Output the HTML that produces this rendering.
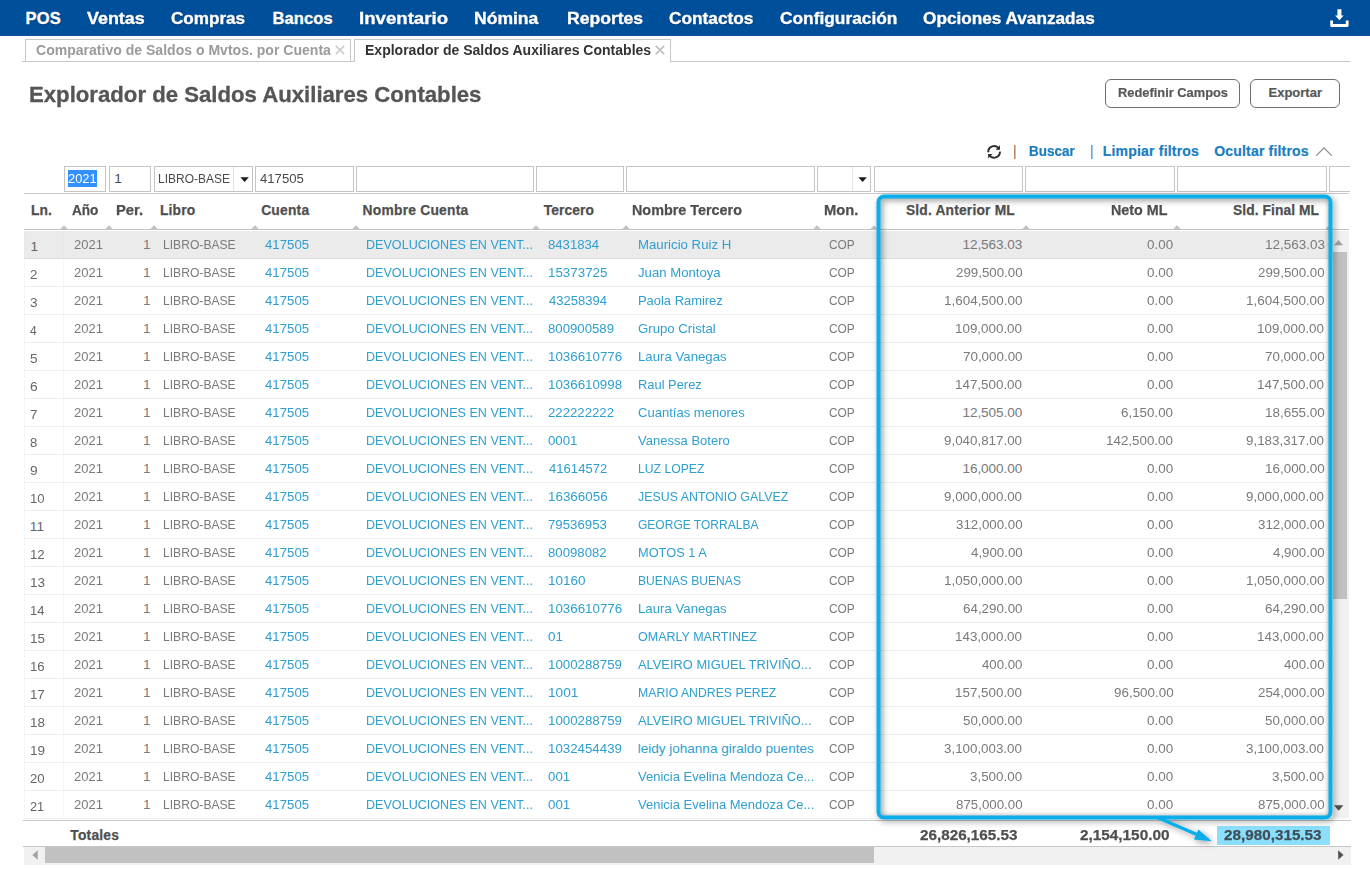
<!DOCTYPE html>
<html><head><meta charset="utf-8"><title>Explorador de Saldos Auxiliares Contables</title>
<style>
html,body{margin:0;padding:0;background:#fff;}
body{width:1370px;height:870px;position:relative;overflow:hidden;font-family:"Liberation Sans",sans-serif;}
.t{position:absolute;white-space:nowrap;line-height:20px;transform-origin:0 0;}
.b{position:absolute;}
</style></head><body>
<div class="b" style="left:0px;top:0px;width:1370px;height:35px;background:#004f9a;"></div>
<div class="b" style="left:0px;top:35px;width:1370px;height:1px;background:#1a4a9c;"></div>
<span class="t" id="t1" style="top:8.25px;font-size:16.5px;color:#ffffff;font-weight:bold;letter-spacing:0.187px;left:25.56px;-webkit-text-stroke:0.35px #ffffff;text-shadow:0 1px 1px rgba(0,30,80,0.6);">POS</span>
<span class="t" id="t2" style="top:8.25px;font-size:16.5px;color:#ffffff;font-weight:bold;left:87px;transform:scaleX(1.0854);-webkit-text-stroke:0.35px #ffffff;text-shadow:0 1px 1px rgba(0,30,80,0.6);">Ventas</span>
<span class="t" id="t3" style="top:8.25px;font-size:16.5px;color:#ffffff;font-weight:bold;left:171px;transform:scaleX(1.0364);-webkit-text-stroke:0.35px #ffffff;text-shadow:0 1px 1px rgba(0,30,80,0.6);">Compras</span>
<span class="t" id="t4" style="top:8.25px;font-size:16.5px;color:#ffffff;font-weight:bold;letter-spacing:0.093px;left:272.52px;-webkit-text-stroke:0.35px #ffffff;text-shadow:0 1px 1px rgba(0,30,80,0.6);">Bancos</span>
<span class="t" id="t5" style="top:8.25px;font-size:16.5px;color:#ffffff;font-weight:bold;left:359px;transform:scaleX(1.1292);-webkit-text-stroke:0.35px #ffffff;text-shadow:0 1px 1px rgba(0,30,80,0.6);">Inventario</span>
<span class="t" id="t6" style="top:8.25px;font-size:16.5px;color:#ffffff;font-weight:bold;left:474px;transform:scaleX(1.0635);-webkit-text-stroke:0.35px #ffffff;text-shadow:0 1px 1px rgba(0,30,80,0.6);">Nómina</span>
<span class="t" id="t7" style="top:8.25px;font-size:16.5px;color:#ffffff;font-weight:bold;left:567px;transform:scaleX(1.0644);-webkit-text-stroke:0.35px #ffffff;text-shadow:0 1px 1px rgba(0,30,80,0.6);">Reportes</span>
<span class="t" id="t8" style="top:8.25px;font-size:16.5px;color:#ffffff;font-weight:bold;left:669px;transform:scaleX(1.0459);-webkit-text-stroke:0.35px #ffffff;text-shadow:0 1px 1px rgba(0,30,80,0.6);">Contactos</span>
<span class="t" id="t9" style="top:8.25px;font-size:16.5px;color:#ffffff;font-weight:bold;left:780px;transform:scaleX(1.0498);-webkit-text-stroke:0.35px #ffffff;text-shadow:0 1px 1px rgba(0,30,80,0.6);">Configuración</span>
<span class="t" id="t10" style="top:8.25px;font-size:16.5px;color:#ffffff;font-weight:bold;left:923px;transform:scaleX(1.0425);-webkit-text-stroke:0.35px #ffffff;text-shadow:0 1px 1px rgba(0,30,80,0.6);">Opciones Avanzadas</span>
<svg class="b" style="left:1328px;top:7px;" width="24" height="22" viewBox="0 0 24 22"><path d="M9.4 2.2h4v6.2h2.2L11.4 13.2L7.1 8.4h2.3z" fill="#fff"/><path d="M3.6 13.4v5.1h15.6v-5.1" stroke="#fff" stroke-width="2.8" fill="none" stroke-linejoin="round"/></svg>
<div class="b" style="left:22px;top:61px;width:333px;height:1px;background:#c6c6c6;"></div>
<div class="b" style="left:671px;top:61px;width:679px;height:1px;background:#c6c6c6;"></div>
<div class="b" style="left:25px;top:39px;width:326px;height:23px;border:1px solid #c6c6c6;border-bottom:none;box-sizing:border-box;"></div>
<div class="b" style="left:354px;top:39px;width:317px;height:23px;border:1px solid #c6c6c6;border-bottom:none;box-sizing:border-box;"></div>
<span class="t" id="t11" style="top:40.25px;font-size:14.5px;color:#9b9b9b;font-weight:bold;left:36px;transform:scaleX(0.9683);">Comparativo de Saldos o Mvtos. por Cuenta</span>
<span class="t" id="t12" style="top:40.25px;font-size:14.5px;color:#333333;font-weight:bold;left:365px;transform:scaleX(0.9667);">Explorador de Saldos Auxiliares Contables</span>
<svg class="b" style="left:335.3px;top:44.6px;" width="10" height="10" viewBox="0 0 10 10"><path d="M0.8 0.8L9.2 9.2M9.2 0.8L0.8 9.2" stroke="#cdcdcd" stroke-width="1.7" fill="none"/></svg>
<svg class="b" style="left:654.6px;top:44.6px;" width="10" height="10" viewBox="0 0 10 10"><path d="M0.8 0.8L9.2 9.2M9.2 0.8L0.8 9.2" stroke="#c0c0c0" stroke-width="1.7" fill="none"/></svg>
<span class="t" id="t13" style="top:84.75px;font-size:21.5px;color:#555555;font-weight:bold;left:29px;transform:scaleX(1.0309);-webkit-text-stroke:0.3px #555555;">Explorador de Saldos Auxiliares Contables</span>
<div class="b" style="left:1105px;top:79px;width:135px;height:29px;border:1px solid #6f6f6f;border-radius:6px;box-sizing:border-box;"></div>
<div class="b" style="left:1250px;top:79px;width:90px;height:29px;border:1px solid #6f6f6f;border-radius:6px;box-sizing:border-box;"></div>
<span class="t" id="t14" style="top:82.5px;font-size:13px;color:#575757;font-weight:bold;left:1118px;transform:scaleX(0.9888);-webkit-text-stroke:0.2px #575757;">Redefinir Campos</span>
<span class="t" id="t15" style="top:82.5px;font-size:13px;color:#575757;font-weight:bold;letter-spacing:0.012px;left:1268.48px;-webkit-text-stroke:0.2px #575757;">Exportar</span>
<svg class="b" style="left:986px;top:144px;" width="16" height="16" viewBox="0 0 16 16"><path d="M2.3 8.2A5.8 5.8 0 0 1 12.85 4.57" stroke="#2e2e2e" stroke-width="2" fill="none"/><path d="M13.9 7.6A5.8 5.8 0 0 1 3.35 11.23" stroke="#2e2e2e" stroke-width="2" fill="none"/><path d="M14 1.2V5.8H9.6z" fill="#2e2e2e"/><path d="M2.1 14.5V10H6.5z" fill="#2e2e2e"/></svg>
<div class="b" style="left:1014px;top:145px;width:1px;height:14px;background:#b98a6a;"></div>
<div class="b" style="left:1015px;top:145px;width:1px;height:14px;background:#9accf7;"></div>
<span class="t" id="t16" style="top:141px;font-size:14px;color:#1a7dbf;font-weight:bold;left:1029px;transform:scaleX(0.963);-webkit-text-stroke:0.2px #1a7dbf;">Buscar</span>
<div class="b" style="left:1091px;top:145px;width:1px;height:14px;background:#b98a6a;"></div>
<div class="b" style="left:1092px;top:145px;width:1px;height:14px;background:#9accf7;"></div>
<span class="t" id="t17" style="top:141px;font-size:14px;color:#1a7dbf;font-weight:bold;letter-spacing:0.2px;left:1102.78px;-webkit-text-stroke:0.2px #1a7dbf;">Limpiar filtros</span>
<span class="t" id="t18" style="top:141px;font-size:14px;color:#1a7dbf;font-weight:bold;letter-spacing:0.189px;left:1214.19px;-webkit-text-stroke:0.2px #1a7dbf;">Ocultar filtros</span>
<svg class="b" style="left:1315px;top:145px;" width="18" height="12" viewBox="0 0 18 12"><path d="M1.3 10.6 L9 2.9 L16.7 10.6" stroke="#8a8a8a" stroke-width="1.3" fill="none"/></svg>
<div class="b" style="left:64px;top:166px;width:42px;height:26px;border:1px solid #c4c4c4;box-sizing:border-box;background:#fff;"></div>
<div class="b" style="left:109px;top:166px;width:42px;height:26px;border:1px solid #c4c4c4;box-sizing:border-box;background:#fff;"></div>
<div class="b" style="left:154px;top:166px;width:99px;height:26px;border:1px solid #c4c4c4;box-sizing:border-box;background:#fff;"></div>
<div class="b" style="left:255px;top:166px;width:99px;height:26px;border:1px solid #c4c4c4;box-sizing:border-box;background:#fff;"></div>
<div class="b" style="left:356px;top:166px;width:178px;height:26px;border:1px solid #c4c4c4;box-sizing:border-box;background:#fff;"></div>
<div class="b" style="left:536px;top:166px;width:88px;height:26px;border:1px solid #c4c4c4;box-sizing:border-box;background:#fff;"></div>
<div class="b" style="left:626px;top:166px;width:189px;height:26px;border:1px solid #c4c4c4;box-sizing:border-box;background:#fff;"></div>
<div class="b" style="left:817px;top:166px;width:54px;height:26px;border:1px solid #c4c4c4;box-sizing:border-box;background:#fff;"></div>
<div class="b" style="left:874px;top:166px;width:149px;height:26px;border:1px solid #c4c4c4;box-sizing:border-box;background:#fff;"></div>
<div class="b" style="left:1025px;top:166px;width:150px;height:26px;border:1px solid #c4c4c4;box-sizing:border-box;background:#fff;"></div>
<div class="b" style="left:1177px;top:166px;width:150px;height:26px;border:1px solid #c4c4c4;box-sizing:border-box;background:#fff;"></div>
<div class="b" style="left:1329px;top:166px;width:20.5px;height:26px;border:1px solid #c4c4c4;box-sizing:border-box;background:#fff;border-right:none;"></div>
<div class="b" style="left:68px;top:170px;width:29px;height:17px;background:#3390ff;"></div>
<span class="t" id="t19" style="top:169px;font-size:13.6px;color:#ffffff;left:68px;transform:scaleX(0.9446);">2021</span>
<span class="t" id="t20" style="top:169px;font-size:13.6px;color:#4a4a4a;left:114.29px;">1</span>
<span class="t" id="t21" style="top:169px;font-size:13.6px;color:#4a4a4a;left:158px;transform:scaleX(0.8812);">LIBRO-BASE</span>
<div class="b" style="left:233px;top:167px;width:1px;height:24px;background:#e4e4e4;"></div>
<svg class="b" style="left:240px;top:177px;" width="10" height="6" viewBox="0 0 10 6"><path d="M0.4 0.3h8.4L4.6 5z" fill="#1a1a1a"/></svg>
<span class="t" id="t22" style="top:169px;font-size:13.6px;color:#4a4a4a;left:260px;transform:scaleX(0.967);">417505</span>
<div class="b" style="left:852px;top:167px;width:1px;height:24px;background:#e4e4e4;"></div>
<svg class="b" style="left:858px;top:177px;" width="10" height="6" viewBox="0 0 10 6"><path d="M0.4 0.3h8.4L4.6 5z" fill="#1a1a1a"/></svg>
<div class="b" style="left:24px;top:193px;width:1325px;height:1px;background:#c9c9c9;"></div>
<div class="b" style="left:24px;top:229px;width:1325px;height:1px;background:#c2c2c2;"></div>
<span class="t" id="t23" style="top:201.25px;font-size:13.8px;color:#4f4f4f;font-weight:bold;letter-spacing:0.148px;left:30.92px;-webkit-text-stroke:0.25px #4f4f4f;">Ln.</span>
<span class="t" id="t24" style="top:201.25px;font-size:13.8px;color:#4f4f4f;font-weight:bold;left:72px;transform:scaleX(0.9847);-webkit-text-stroke:0.25px #4f4f4f;">Año</span>
<span class="t" id="t25" style="top:201.25px;font-size:13.8px;color:#4f4f4f;font-weight:bold;left:116px;transform:scaleX(1.0725);-webkit-text-stroke:0.25px #4f4f4f;">Per.</span>
<span class="t" id="t26" style="top:201.25px;font-size:13.8px;color:#4f4f4f;font-weight:bold;letter-spacing:0.155px;left:160px;-webkit-text-stroke:0.25px #4f4f4f;">Libro</span>
<span class="t" id="t27" style="top:201.25px;font-size:13.8px;color:#4f4f4f;font-weight:bold;letter-spacing:0.226px;left:261.18px;-webkit-text-stroke:0.25px #4f4f4f;">Cuenta</span>
<span class="t" id="t28" style="top:201.25px;font-size:13.8px;color:#4f4f4f;font-weight:bold;letter-spacing:0.235px;left:362.62px;-webkit-text-stroke:0.25px #4f4f4f;">Nombre Cuenta</span>
<span class="t" id="t29" style="top:201.25px;font-size:13.8px;color:#4f4f4f;font-weight:bold;letter-spacing:0.118px;left:543.67px;-webkit-text-stroke:0.25px #4f4f4f;">Tercero</span>
<span class="t" id="t30" style="top:201.25px;font-size:13.8px;color:#4f4f4f;font-weight:bold;left:632px;transform:scaleX(1.0412);-webkit-text-stroke:0.25px #4f4f4f;">Nombre Tercero</span>
<span class="t" id="t31" style="top:201.25px;font-size:13.8px;color:#4f4f4f;font-weight:bold;left:824px;transform:scaleX(1.0667);-webkit-text-stroke:0.25px #4f4f4f;">Mon.</span>
<span class="t" id="t32" style="top:201.25px;font-size:13.8px;color:#4f4f4f;font-weight:bold;letter-spacing:0.19px;left:905.89px;-webkit-text-stroke:0.25px #4f4f4f;">Sld. Anterior ML</span>
<span class="t" id="t33" style="top:201.25px;font-size:13.8px;color:#4f4f4f;font-weight:bold;left:1111px;transform:scaleX(1.0373);-webkit-text-stroke:0.25px #4f4f4f;">Neto ML</span>
<span class="t" id="t34" style="top:201.25px;font-size:13.8px;color:#4f4f4f;font-weight:bold;letter-spacing:0.08px;left:1232.95px;-webkit-text-stroke:0.25px #4f4f4f;">Sld. Final ML</span>
<svg class="b" style="left:59.5px;top:225px;" width="8" height="4" viewBox="0 0 8 4"><path d="M0.3 4L4 0.2L7.7 4z" fill="#c2c2c2"/></svg>
<svg class="b" style="left:104.5px;top:225px;" width="8" height="4" viewBox="0 0 8 4"><path d="M0.3 4L4 0.2L7.7 4z" fill="#c2c2c2"/></svg>
<svg class="b" style="left:149.5px;top:225px;" width="8" height="4" viewBox="0 0 8 4"><path d="M0.3 4L4 0.2L7.7 4z" fill="#c2c2c2"/></svg>
<svg class="b" style="left:250.5px;top:225px;" width="8" height="4" viewBox="0 0 8 4"><path d="M0.3 4L4 0.2L7.7 4z" fill="#c2c2c2"/></svg>
<svg class="b" style="left:352px;top:225px;" width="8" height="4" viewBox="0 0 8 4"><path d="M0.3 4L4 0.2L7.7 4z" fill="#c2c2c2"/></svg>
<svg class="b" style="left:532px;top:225px;" width="8" height="4" viewBox="0 0 8 4"><path d="M0.3 4L4 0.2L7.7 4z" fill="#c2c2c2"/></svg>
<svg class="b" style="left:622px;top:225px;" width="8" height="4" viewBox="0 0 8 4"><path d="M0.3 4L4 0.2L7.7 4z" fill="#c2c2c2"/></svg>
<svg class="b" style="left:813px;top:225px;" width="8" height="4" viewBox="0 0 8 4"><path d="M0.3 4L4 0.2L7.7 4z" fill="#c2c2c2"/></svg>
<svg class="b" style="left:869.5px;top:225px;" width="8" height="4" viewBox="0 0 8 4"><path d="M0.3 4L4 0.2L7.7 4z" fill="#c2c2c2"/></svg>
<svg class="b" style="left:1021.5px;top:225px;" width="8" height="4" viewBox="0 0 8 4"><path d="M0.3 4L4 0.2L7.7 4z" fill="#c2c2c2"/></svg>
<svg class="b" style="left:1173px;top:225px;" width="8" height="4" viewBox="0 0 8 4"><path d="M0.3 4L4 0.2L7.7 4z" fill="#c2c2c2"/></svg>
<svg class="b" style="left:1324.5px;top:225px;" width="8" height="4" viewBox="0 0 8 4"><path d="M0.3 4L4 0.2L7.7 4z" fill="#c2c2c2"/></svg>
<div class="b" style="left:24px;top:231px;width:1309px;height:28px;background:#ebebeb;border-bottom:1px solid #dddddd;box-sizing:border-box;"></div>
<div class="b" style="left:24px;top:231px;width:1px;height:27px;background:#e3eaed;"></div>
<div class="b" style="left:63px;top:231px;width:1px;height:27px;background:#e3eaed;"></div>
<span class="t" id="t35" style="top:237.25px;font-size:13.61px;color:#666666;left:30.53px;">1</span>
<span class="t" id="t36" style="top:234.5px;font-size:13.6px;color:#7a7a7a;left:74px;transform:scaleX(0.9557);">2021</span>
<span class="t" id="t37" style="top:234.5px;font-size:13.6px;color:#7a7a7a;left:143px;">1</span>
<span class="t" id="t38" style="top:234.5px;font-size:13.6px;color:#7a7a7a;left:163px;transform:scaleX(0.8909);">LIBRO-BASE</span>
<span class="t" id="t39" style="top:234.5px;font-size:13.6px;color:#2f9fd0;left:265px;transform:scaleX(0.9718);">417505</span>
<span class="t" id="t40" style="top:234.5px;font-size:13.6px;color:#2f9fd0;left:366px;transform:scaleX(0.9254);">DEVOLUCIONES EN VENT...</span>
<span class="t" id="t41" style="top:234.5px;font-size:13.6px;color:#2f9fd0;left:548px;transform:scaleX(0.9665);">8431834</span>
<span class="t" id="t42" style="top:234.5px;font-size:13.6px;color:#2f9fd0;left:638px;transform:scaleX(0.9721);">Mauricio Ruiz H</span>
<span class="t" id="t43" style="top:234.5px;font-size:13.6px;color:#7a7a7a;left:829px;transform:scaleX(0.8737);">COP</span>
<span class="t" id="t44" style="top:234.5px;font-size:13.6px;color:#7a7a7a;letter-spacing:-0.076px;left:962.46px;">12,563.03</span>
<span class="t" id="t45" style="top:234.5px;font-size:13.6px;color:#7a7a7a;left:1147px;transform:scaleX(0.9867);">0.00</span>
<span class="t" id="t46" style="top:234.5px;font-size:13.6px;color:#7a7a7a;left:1265px;transform:scaleX(0.9922);">12,563.03</span>
<div class="b" style="left:24px;top:259px;width:1309px;height:28px;background:#ffffff;border-bottom:1px solid #eeeeee;box-sizing:border-box;"></div>
<div class="b" style="left:24px;top:259px;width:1px;height:27px;background:#f1f8fb;"></div>
<div class="b" style="left:63px;top:259px;width:1px;height:27px;background:#f1f8fb;"></div>
<span class="t" id="t47" style="top:265.25px;font-size:13.61px;color:#666666;left:30px;transform:scaleX(0.9776);">2</span>
<span class="t" id="t48" style="top:262.5px;font-size:13.6px;color:#7a7a7a;left:74px;transform:scaleX(0.9557);">2021</span>
<span class="t" id="t49" style="top:262.5px;font-size:13.6px;color:#7a7a7a;left:143px;">1</span>
<span class="t" id="t50" style="top:262.5px;font-size:13.6px;color:#7a7a7a;left:163px;transform:scaleX(0.8909);">LIBRO-BASE</span>
<span class="t" id="t51" style="top:262.5px;font-size:13.6px;color:#2f9fd0;left:265px;transform:scaleX(0.9718);">417505</span>
<span class="t" id="t52" style="top:262.5px;font-size:13.6px;color:#2f9fd0;left:366px;transform:scaleX(0.9254);">DEVOLUCIONES EN VENT...</span>
<span class="t" id="t53" style="top:262.5px;font-size:13.6px;color:#2f9fd0;left:548px;transform:scaleX(0.9834);">15373725</span>
<span class="t" id="t54" style="top:262.5px;font-size:13.6px;color:#2f9fd0;left:638px;transform:scaleX(0.9675);">Juan Montoya</span>
<span class="t" id="t55" style="top:262.5px;font-size:13.6px;color:#7a7a7a;left:829px;transform:scaleX(0.8737);">COP</span>
<span class="t" id="t56" style="top:262.5px;font-size:13.6px;color:#7a7a7a;left:956px;transform:scaleX(0.9786);">299,500.00</span>
<span class="t" id="t57" style="top:262.5px;font-size:13.6px;color:#7a7a7a;left:1147px;transform:scaleX(0.9867);">0.00</span>
<span class="t" id="t58" style="top:262.5px;font-size:13.6px;color:#7a7a7a;left:1258px;transform:scaleX(0.9786);">299,500.00</span>
<div class="b" style="left:24px;top:287px;width:1309px;height:28px;background:#ffffff;border-bottom:1px solid #eeeeee;box-sizing:border-box;"></div>
<div class="b" style="left:24px;top:287px;width:1px;height:27px;background:#f1f8fb;"></div>
<div class="b" style="left:63px;top:287px;width:1px;height:27px;background:#f1f8fb;"></div>
<span class="t" id="t59" style="top:293.25px;font-size:13.61px;color:#666666;left:30px;transform:scaleX(1.0013);">3</span>
<span class="t" id="t60" style="top:290.5px;font-size:13.6px;color:#7a7a7a;left:74px;transform:scaleX(0.9557);">2021</span>
<span class="t" id="t61" style="top:290.5px;font-size:13.6px;color:#7a7a7a;left:143px;">1</span>
<span class="t" id="t62" style="top:290.5px;font-size:13.6px;color:#7a7a7a;left:163px;transform:scaleX(0.8909);">LIBRO-BASE</span>
<span class="t" id="t63" style="top:290.5px;font-size:13.6px;color:#2f9fd0;left:265px;transform:scaleX(0.9718);">417505</span>
<span class="t" id="t64" style="top:290.5px;font-size:13.6px;color:#2f9fd0;left:366px;transform:scaleX(0.9254);">DEVOLUCIONES EN VENT...</span>
<span class="t" id="t65" style="top:290.5px;font-size:13.6px;color:#2f9fd0;left:549px;transform:scaleX(0.9573);">43258394</span>
<span class="t" id="t66" style="top:290.5px;font-size:13.6px;color:#2f9fd0;left:638px;transform:scaleX(0.9509);">Paola Ramirez</span>
<span class="t" id="t67" style="top:290.5px;font-size:13.6px;color:#7a7a7a;left:829px;transform:scaleX(0.8737);">COP</span>
<span class="t" id="t68" style="top:290.5px;font-size:13.6px;color:#7a7a7a;left:944px;transform:scaleX(0.9889);">1,604,500.00</span>
<span class="t" id="t69" style="top:290.5px;font-size:13.6px;color:#7a7a7a;left:1147px;transform:scaleX(0.9867);">0.00</span>
<span class="t" id="t70" style="top:290.5px;font-size:13.6px;color:#7a7a7a;left:1246px;transform:scaleX(0.9899);">1,604,500.00</span>
<div class="b" style="left:24px;top:315px;width:1309px;height:28px;background:#ffffff;border-bottom:1px solid #eeeeee;box-sizing:border-box;"></div>
<div class="b" style="left:24px;top:315px;width:1px;height:27px;background:#f1f8fb;"></div>
<div class="b" style="left:63px;top:315px;width:1px;height:27px;background:#f1f8fb;"></div>
<span class="t" id="t71" style="top:321.25px;font-size:13.61px;color:#666666;left:30px;transform:scaleX(0.8816);">4</span>
<span class="t" id="t72" style="top:318.5px;font-size:13.6px;color:#7a7a7a;left:74px;transform:scaleX(0.9557);">2021</span>
<span class="t" id="t73" style="top:318.5px;font-size:13.6px;color:#7a7a7a;left:143px;">1</span>
<span class="t" id="t74" style="top:318.5px;font-size:13.6px;color:#7a7a7a;left:163px;transform:scaleX(0.8909);">LIBRO-BASE</span>
<span class="t" id="t75" style="top:318.5px;font-size:13.6px;color:#2f9fd0;left:265px;transform:scaleX(0.9718);">417505</span>
<span class="t" id="t76" style="top:318.5px;font-size:13.6px;color:#2f9fd0;left:366px;transform:scaleX(0.9254);">DEVOLUCIONES EN VENT...</span>
<span class="t" id="t77" style="top:318.5px;font-size:13.6px;color:#2f9fd0;left:548px;transform:scaleX(0.9705);">800900589</span>
<span class="t" id="t78" style="top:318.5px;font-size:13.6px;color:#2f9fd0;left:638px;transform:scaleX(0.9698);">Grupo Cristal</span>
<span class="t" id="t79" style="top:318.5px;font-size:13.6px;color:#7a7a7a;left:829px;transform:scaleX(0.8737);">COP</span>
<span class="t" id="t80" style="top:318.5px;font-size:13.6px;color:#7a7a7a;left:955px;transform:scaleX(0.9845);">109,000.00</span>
<span class="t" id="t81" style="top:318.5px;font-size:13.6px;color:#7a7a7a;left:1147px;transform:scaleX(0.9867);">0.00</span>
<span class="t" id="t82" style="top:318.5px;font-size:13.6px;color:#7a7a7a;left:1257px;transform:scaleX(0.9845);">109,000.00</span>
<div class="b" style="left:24px;top:343px;width:1309px;height:28px;background:#ffffff;border-bottom:1px solid #eeeeee;box-sizing:border-box;"></div>
<div class="b" style="left:24px;top:343px;width:1px;height:27px;background:#f1f8fb;"></div>
<div class="b" style="left:63px;top:343px;width:1px;height:27px;background:#f1f8fb;"></div>
<span class="t" id="t83" style="top:349.25px;font-size:13.61px;color:#666666;left:30px;transform:scaleX(1.0027);">5</span>
<span class="t" id="t84" style="top:346.5px;font-size:13.6px;color:#7a7a7a;left:74px;transform:scaleX(0.9557);">2021</span>
<span class="t" id="t85" style="top:346.5px;font-size:13.6px;color:#7a7a7a;left:143px;">1</span>
<span class="t" id="t86" style="top:346.5px;font-size:13.6px;color:#7a7a7a;left:163px;transform:scaleX(0.8909);">LIBRO-BASE</span>
<span class="t" id="t87" style="top:346.5px;font-size:13.6px;color:#2f9fd0;left:265px;transform:scaleX(0.9718);">417505</span>
<span class="t" id="t88" style="top:346.5px;font-size:13.6px;color:#2f9fd0;left:366px;transform:scaleX(0.9254);">DEVOLUCIONES EN VENT...</span>
<span class="t" id="t89" style="top:346.5px;font-size:13.6px;color:#2f9fd0;left:548px;transform:scaleX(0.9805);">1036610776</span>
<span class="t" id="t90" style="top:346.5px;font-size:13.6px;color:#2f9fd0;left:638px;transform:scaleX(0.9717);">Laura Vanegas</span>
<span class="t" id="t91" style="top:346.5px;font-size:13.6px;color:#7a7a7a;left:829px;transform:scaleX(0.8737);">COP</span>
<span class="t" id="t92" style="top:346.5px;font-size:13.6px;color:#7a7a7a;left:963px;transform:scaleX(0.9845);">70,000.00</span>
<span class="t" id="t93" style="top:346.5px;font-size:13.6px;color:#7a7a7a;left:1147px;transform:scaleX(0.9867);">0.00</span>
<span class="t" id="t94" style="top:346.5px;font-size:13.6px;color:#7a7a7a;left:1265px;transform:scaleX(0.9854);">70,000.00</span>
<div class="b" style="left:24px;top:371px;width:1309px;height:28px;background:#ffffff;border-bottom:1px solid #eeeeee;box-sizing:border-box;"></div>
<div class="b" style="left:24px;top:371px;width:1px;height:27px;background:#f1f8fb;"></div>
<div class="b" style="left:63px;top:371px;width:1px;height:27px;background:#f1f8fb;"></div>
<span class="t" id="t95" style="top:377.25px;font-size:13.61px;color:#666666;left:30px;transform:scaleX(1.013);">6</span>
<span class="t" id="t96" style="top:374.5px;font-size:13.6px;color:#7a7a7a;left:74px;transform:scaleX(0.9557);">2021</span>
<span class="t" id="t97" style="top:374.5px;font-size:13.6px;color:#7a7a7a;left:143px;">1</span>
<span class="t" id="t98" style="top:374.5px;font-size:13.6px;color:#7a7a7a;left:163px;transform:scaleX(0.8909);">LIBRO-BASE</span>
<span class="t" id="t99" style="top:374.5px;font-size:13.6px;color:#2f9fd0;left:265px;transform:scaleX(0.9718);">417505</span>
<span class="t" id="t100" style="top:374.5px;font-size:13.6px;color:#2f9fd0;left:366px;transform:scaleX(0.9254);">DEVOLUCIONES EN VENT...</span>
<span class="t" id="t101" style="top:374.5px;font-size:13.6px;color:#2f9fd0;left:548px;transform:scaleX(0.9802);">1036610998</span>
<span class="t" id="t102" style="top:374.5px;font-size:13.6px;color:#2f9fd0;left:638px;transform:scaleX(0.9484);">Raul Perez</span>
<span class="t" id="t103" style="top:374.5px;font-size:13.6px;color:#7a7a7a;left:829px;transform:scaleX(0.8737);">COP</span>
<span class="t" id="t104" style="top:374.5px;font-size:13.6px;color:#7a7a7a;left:955px;transform:scaleX(0.9845);">147,500.00</span>
<span class="t" id="t105" style="top:374.5px;font-size:13.6px;color:#7a7a7a;left:1147px;transform:scaleX(0.9867);">0.00</span>
<span class="t" id="t106" style="top:374.5px;font-size:13.6px;color:#7a7a7a;left:1257px;transform:scaleX(0.9845);">147,500.00</span>
<div class="b" style="left:24px;top:399px;width:1309px;height:28px;background:#ffffff;border-bottom:1px solid #eeeeee;box-sizing:border-box;"></div>
<div class="b" style="left:24px;top:399px;width:1px;height:27px;background:#f1f8fb;"></div>
<div class="b" style="left:63px;top:399px;width:1px;height:27px;background:#f1f8fb;"></div>
<span class="t" id="t107" style="top:405.25px;font-size:13.61px;color:#666666;left:30px;transform:scaleX(0.9776);">7</span>
<span class="t" id="t108" style="top:402.5px;font-size:13.6px;color:#7a7a7a;left:74px;transform:scaleX(0.9557);">2021</span>
<span class="t" id="t109" style="top:402.5px;font-size:13.6px;color:#7a7a7a;left:143px;">1</span>
<span class="t" id="t110" style="top:402.5px;font-size:13.6px;color:#7a7a7a;left:163px;transform:scaleX(0.8909);">LIBRO-BASE</span>
<span class="t" id="t111" style="top:402.5px;font-size:13.6px;color:#2f9fd0;left:265px;transform:scaleX(0.9718);">417505</span>
<span class="t" id="t112" style="top:402.5px;font-size:13.6px;color:#2f9fd0;left:366px;transform:scaleX(0.9254);">DEVOLUCIONES EN VENT...</span>
<span class="t" id="t113" style="top:402.5px;font-size:13.6px;color:#2f9fd0;left:548px;transform:scaleX(0.9703);">222222222</span>
<span class="t" id="t114" style="top:402.5px;font-size:13.6px;color:#2f9fd0;left:638px;transform:scaleX(0.9602);">Cuantías menores</span>
<span class="t" id="t115" style="top:402.5px;font-size:13.6px;color:#7a7a7a;left:829px;transform:scaleX(0.8737);">COP</span>
<span class="t" id="t116" style="top:402.5px;font-size:13.6px;color:#7a7a7a;letter-spacing:-0.085px;left:962.46px;">12,505.00</span>
<span class="t" id="t117" style="top:402.5px;font-size:13.6px;color:#7a7a7a;left:1121px;transform:scaleX(0.9824);">6,150.00</span>
<span class="t" id="t118" style="top:402.5px;font-size:13.6px;color:#7a7a7a;left:1265px;transform:scaleX(0.9881);">18,655.00</span>
<div class="b" style="left:24px;top:427px;width:1309px;height:28px;background:#ffffff;border-bottom:1px solid #eeeeee;box-sizing:border-box;"></div>
<div class="b" style="left:24px;top:427px;width:1px;height:27px;background:#f1f8fb;"></div>
<div class="b" style="left:63px;top:427px;width:1px;height:27px;background:#f1f8fb;"></div>
<span class="t" id="t119" style="top:433.25px;font-size:13.61px;color:#666666;left:30px;transform:scaleX(0.9641);">8</span>
<span class="t" id="t120" style="top:430.5px;font-size:13.6px;color:#7a7a7a;left:74px;transform:scaleX(0.9557);">2021</span>
<span class="t" id="t121" style="top:430.5px;font-size:13.6px;color:#7a7a7a;left:143px;">1</span>
<span class="t" id="t122" style="top:430.5px;font-size:13.6px;color:#7a7a7a;left:163px;transform:scaleX(0.8909);">LIBRO-BASE</span>
<span class="t" id="t123" style="top:430.5px;font-size:13.6px;color:#2f9fd0;left:265px;transform:scaleX(0.9718);">417505</span>
<span class="t" id="t124" style="top:430.5px;font-size:13.6px;color:#2f9fd0;left:366px;transform:scaleX(0.9254);">DEVOLUCIONES EN VENT...</span>
<span class="t" id="t125" style="top:430.5px;font-size:13.6px;color:#2f9fd0;left:548px;transform:scaleX(0.9747);">0001</span>
<span class="t" id="t126" style="top:430.5px;font-size:13.6px;color:#2f9fd0;left:638px;transform:scaleX(0.9593);">Vanessa Botero</span>
<span class="t" id="t127" style="top:430.5px;font-size:13.6px;color:#7a7a7a;left:829px;transform:scaleX(0.8737);">COP</span>
<span class="t" id="t128" style="top:430.5px;font-size:13.6px;color:#7a7a7a;left:944px;transform:scaleX(0.9833);">9,040,817.00</span>
<span class="t" id="t129" style="top:430.5px;font-size:13.6px;color:#7a7a7a;left:1106px;transform:scaleX(0.9843);">142,500.00</span>
<span class="t" id="t130" style="top:430.5px;font-size:13.6px;color:#7a7a7a;left:1246px;transform:scaleX(0.9833);">9,183,317.00</span>
<div class="b" style="left:24px;top:455px;width:1309px;height:28px;background:#ffffff;border-bottom:1px solid #eeeeee;box-sizing:border-box;"></div>
<div class="b" style="left:24px;top:455px;width:1px;height:27px;background:#f1f8fb;"></div>
<div class="b" style="left:63px;top:455px;width:1px;height:27px;background:#f1f8fb;"></div>
<span class="t" id="t131" style="top:461.25px;font-size:13.61px;color:#666666;left:30px;transform:scaleX(1.0111);">9</span>
<span class="t" id="t132" style="top:458.5px;font-size:13.6px;color:#7a7a7a;left:74px;transform:scaleX(0.9557);">2021</span>
<span class="t" id="t133" style="top:458.5px;font-size:13.6px;color:#7a7a7a;left:143px;">1</span>
<span class="t" id="t134" style="top:458.5px;font-size:13.6px;color:#7a7a7a;left:163px;transform:scaleX(0.8909);">LIBRO-BASE</span>
<span class="t" id="t135" style="top:458.5px;font-size:13.6px;color:#2f9fd0;left:265px;transform:scaleX(0.9718);">417505</span>
<span class="t" id="t136" style="top:458.5px;font-size:13.6px;color:#2f9fd0;left:366px;transform:scaleX(0.9254);">DEVOLUCIONES EN VENT...</span>
<span class="t" id="t137" style="top:458.5px;font-size:13.6px;color:#2f9fd0;left:549px;transform:scaleX(0.9642);">41614572</span>
<span class="t" id="t138" style="top:458.5px;font-size:13.6px;color:#2f9fd0;left:638px;transform:scaleX(0.8967);">LUZ LOPEZ</span>
<span class="t" id="t139" style="top:458.5px;font-size:13.6px;color:#7a7a7a;left:829px;transform:scaleX(0.8737);">COP</span>
<span class="t" id="t140" style="top:458.5px;font-size:13.6px;color:#7a7a7a;letter-spacing:-0.085px;left:962.46px;">16,000.00</span>
<span class="t" id="t141" style="top:458.5px;font-size:13.6px;color:#7a7a7a;left:1147px;transform:scaleX(0.9867);">0.00</span>
<span class="t" id="t142" style="top:458.5px;font-size:13.6px;color:#7a7a7a;left:1265px;transform:scaleX(0.9881);">16,000.00</span>
<div class="b" style="left:24px;top:483px;width:1309px;height:28px;background:#ffffff;border-bottom:1px solid #eeeeee;box-sizing:border-box;"></div>
<div class="b" style="left:24px;top:483px;width:1px;height:27px;background:#f1f8fb;"></div>
<div class="b" style="left:63px;top:483px;width:1px;height:27px;background:#f1f8fb;"></div>
<span class="t" id="t143" style="top:489.25px;font-size:13.61px;color:#666666;left:30px;transform:scaleX(0.9637);">10</span>
<span class="t" id="t144" style="top:486.5px;font-size:13.6px;color:#7a7a7a;left:74px;transform:scaleX(0.9557);">2021</span>
<span class="t" id="t145" style="top:486.5px;font-size:13.6px;color:#7a7a7a;left:143px;">1</span>
<span class="t" id="t146" style="top:486.5px;font-size:13.6px;color:#7a7a7a;left:163px;transform:scaleX(0.8909);">LIBRO-BASE</span>
<span class="t" id="t147" style="top:486.5px;font-size:13.6px;color:#2f9fd0;left:265px;transform:scaleX(0.9718);">417505</span>
<span class="t" id="t148" style="top:486.5px;font-size:13.6px;color:#2f9fd0;left:366px;transform:scaleX(0.9254);">DEVOLUCIONES EN VENT...</span>
<span class="t" id="t149" style="top:486.5px;font-size:13.6px;color:#2f9fd0;left:548px;transform:scaleX(0.9858);">16366056</span>
<span class="t" id="t150" style="top:486.5px;font-size:13.6px;color:#2f9fd0;left:638px;transform:scaleX(0.9111);">JESUS ANTONIO GALVEZ</span>
<span class="t" id="t151" style="top:486.5px;font-size:13.6px;color:#7a7a7a;left:829px;transform:scaleX(0.8737);">COP</span>
<span class="t" id="t152" style="top:486.5px;font-size:13.6px;color:#7a7a7a;left:944px;transform:scaleX(0.9833);">9,000,000.00</span>
<span class="t" id="t153" style="top:486.5px;font-size:13.6px;color:#7a7a7a;left:1147px;transform:scaleX(0.9867);">0.00</span>
<span class="t" id="t154" style="top:486.5px;font-size:13.6px;color:#7a7a7a;left:1246px;transform:scaleX(0.9833);">9,000,000.00</span>
<div class="b" style="left:24px;top:511px;width:1309px;height:28px;background:#ffffff;border-bottom:1px solid #eeeeee;box-sizing:border-box;"></div>
<div class="b" style="left:24px;top:511px;width:1px;height:27px;background:#f1f8fb;"></div>
<div class="b" style="left:63px;top:511px;width:1px;height:27px;background:#f1f8fb;"></div>
<span class="t" id="t155" style="top:517.25px;font-size:13.61px;color:#666666;letter-spacing:0.063px;left:29.8px;">11</span>
<span class="t" id="t156" style="top:514.5px;font-size:13.6px;color:#7a7a7a;left:74px;transform:scaleX(0.9557);">2021</span>
<span class="t" id="t157" style="top:514.5px;font-size:13.6px;color:#7a7a7a;left:143px;">1</span>
<span class="t" id="t158" style="top:514.5px;font-size:13.6px;color:#7a7a7a;left:163px;transform:scaleX(0.8909);">LIBRO-BASE</span>
<span class="t" id="t159" style="top:514.5px;font-size:13.6px;color:#2f9fd0;left:265px;transform:scaleX(0.9718);">417505</span>
<span class="t" id="t160" style="top:514.5px;font-size:13.6px;color:#2f9fd0;left:366px;transform:scaleX(0.9254);">DEVOLUCIONES EN VENT...</span>
<span class="t" id="t161" style="top:514.5px;font-size:13.6px;color:#2f9fd0;left:548px;transform:scaleX(0.9746);">79536953</span>
<span class="t" id="t162" style="top:514.5px;font-size:13.6px;color:#2f9fd0;left:638px;transform:scaleX(0.8839);">GEORGE TORRALBA</span>
<span class="t" id="t163" style="top:514.5px;font-size:13.6px;color:#7a7a7a;left:829px;transform:scaleX(0.8737);">COP</span>
<span class="t" id="t164" style="top:514.5px;font-size:13.6px;color:#7a7a7a;left:956px;transform:scaleX(0.9789);">312,000.00</span>
<span class="t" id="t165" style="top:514.5px;font-size:13.6px;color:#7a7a7a;left:1147px;transform:scaleX(0.9867);">0.00</span>
<span class="t" id="t166" style="top:514.5px;font-size:13.6px;color:#7a7a7a;left:1258px;transform:scaleX(0.9789);">312,000.00</span>
<div class="b" style="left:24px;top:539px;width:1309px;height:28px;background:#ffffff;border-bottom:1px solid #eeeeee;box-sizing:border-box;"></div>
<div class="b" style="left:24px;top:539px;width:1px;height:27px;background:#f1f8fb;"></div>
<div class="b" style="left:63px;top:539px;width:1px;height:27px;background:#f1f8fb;"></div>
<span class="t" id="t167" style="top:545.25px;font-size:13.61px;color:#666666;left:30px;transform:scaleX(0.9738);">12</span>
<span class="t" id="t168" style="top:542.5px;font-size:13.6px;color:#7a7a7a;left:74px;transform:scaleX(0.9557);">2021</span>
<span class="t" id="t169" style="top:542.5px;font-size:13.6px;color:#7a7a7a;left:143px;">1</span>
<span class="t" id="t170" style="top:542.5px;font-size:13.6px;color:#7a7a7a;left:163px;transform:scaleX(0.8909);">LIBRO-BASE</span>
<span class="t" id="t171" style="top:542.5px;font-size:13.6px;color:#2f9fd0;left:265px;transform:scaleX(0.9718);">417505</span>
<span class="t" id="t172" style="top:542.5px;font-size:13.6px;color:#2f9fd0;left:366px;transform:scaleX(0.9254);">DEVOLUCIONES EN VENT...</span>
<span class="t" id="t173" style="top:542.5px;font-size:13.6px;color:#2f9fd0;left:548px;transform:scaleX(0.9704);">80098082</span>
<span class="t" id="t174" style="top:542.5px;font-size:13.6px;color:#2f9fd0;left:638px;transform:scaleX(0.9415);">MOTOS 1 A</span>
<span class="t" id="t175" style="top:542.5px;font-size:13.6px;color:#7a7a7a;left:829px;transform:scaleX(0.8737);">COP</span>
<span class="t" id="t176" style="top:542.5px;font-size:13.6px;color:#7a7a7a;left:971px;transform:scaleX(0.9772);">4,900.00</span>
<span class="t" id="t177" style="top:542.5px;font-size:13.6px;color:#7a7a7a;left:1147px;transform:scaleX(0.9867);">0.00</span>
<span class="t" id="t178" style="top:542.5px;font-size:13.6px;color:#7a7a7a;left:1273px;transform:scaleX(0.9776);">4,900.00</span>
<div class="b" style="left:24px;top:567px;width:1309px;height:28px;background:#ffffff;border-bottom:1px solid #eeeeee;box-sizing:border-box;"></div>
<div class="b" style="left:24px;top:567px;width:1px;height:27px;background:#f1f8fb;"></div>
<div class="b" style="left:63px;top:567px;width:1px;height:27px;background:#f1f8fb;"></div>
<span class="t" id="t179" style="top:573.25px;font-size:13.61px;color:#666666;left:30px;transform:scaleX(0.9948);">13</span>
<span class="t" id="t180" style="top:570.5px;font-size:13.6px;color:#7a7a7a;left:74px;transform:scaleX(0.9557);">2021</span>
<span class="t" id="t181" style="top:570.5px;font-size:13.6px;color:#7a7a7a;left:143px;">1</span>
<span class="t" id="t182" style="top:570.5px;font-size:13.6px;color:#7a7a7a;left:163px;transform:scaleX(0.8909);">LIBRO-BASE</span>
<span class="t" id="t183" style="top:570.5px;font-size:13.6px;color:#2f9fd0;left:265px;transform:scaleX(0.9718);">417505</span>
<span class="t" id="t184" style="top:570.5px;font-size:13.6px;color:#2f9fd0;left:366px;transform:scaleX(0.9254);">DEVOLUCIONES EN VENT...</span>
<span class="t" id="t185" style="top:570.5px;font-size:13.6px;color:#2f9fd0;left:548px;transform:scaleX(0.994);">10160</span>
<span class="t" id="t186" style="top:570.5px;font-size:13.6px;color:#2f9fd0;left:638px;transform:scaleX(0.8909);">BUENAS BUENAS</span>
<span class="t" id="t187" style="top:570.5px;font-size:13.6px;color:#7a7a7a;left:829px;transform:scaleX(0.8737);">COP</span>
<span class="t" id="t188" style="top:570.5px;font-size:13.6px;color:#7a7a7a;left:944px;transform:scaleX(0.9889);">1,050,000.00</span>
<span class="t" id="t189" style="top:570.5px;font-size:13.6px;color:#7a7a7a;left:1147px;transform:scaleX(0.9867);">0.00</span>
<span class="t" id="t190" style="top:570.5px;font-size:13.6px;color:#7a7a7a;left:1246px;transform:scaleX(0.9899);">1,050,000.00</span>
<div class="b" style="left:24px;top:595px;width:1309px;height:28px;background:#ffffff;border-bottom:1px solid #eeeeee;box-sizing:border-box;"></div>
<div class="b" style="left:24px;top:595px;width:1px;height:27px;background:#f1f8fb;"></div>
<div class="b" style="left:63px;top:595px;width:1px;height:27px;background:#f1f8fb;"></div>
<span class="t" id="t191" style="top:601.25px;font-size:13.61px;color:#666666;left:30px;transform:scaleX(0.9558);">14</span>
<span class="t" id="t192" style="top:598.5px;font-size:13.6px;color:#7a7a7a;left:74px;transform:scaleX(0.9557);">2021</span>
<span class="t" id="t193" style="top:598.5px;font-size:13.6px;color:#7a7a7a;left:143px;">1</span>
<span class="t" id="t194" style="top:598.5px;font-size:13.6px;color:#7a7a7a;left:163px;transform:scaleX(0.8909);">LIBRO-BASE</span>
<span class="t" id="t195" style="top:598.5px;font-size:13.6px;color:#2f9fd0;left:265px;transform:scaleX(0.9718);">417505</span>
<span class="t" id="t196" style="top:598.5px;font-size:13.6px;color:#2f9fd0;left:366px;transform:scaleX(0.9254);">DEVOLUCIONES EN VENT...</span>
<span class="t" id="t197" style="top:598.5px;font-size:13.6px;color:#2f9fd0;left:548px;transform:scaleX(0.9805);">1036610776</span>
<span class="t" id="t198" style="top:598.5px;font-size:13.6px;color:#2f9fd0;left:638px;transform:scaleX(0.9717);">Laura Vanegas</span>
<span class="t" id="t199" style="top:598.5px;font-size:13.6px;color:#7a7a7a;left:829px;transform:scaleX(0.8737);">COP</span>
<span class="t" id="t200" style="top:598.5px;font-size:13.6px;color:#7a7a7a;left:963px;transform:scaleX(0.9846);">64,290.00</span>
<span class="t" id="t201" style="top:598.5px;font-size:13.6px;color:#7a7a7a;left:1147px;transform:scaleX(0.9867);">0.00</span>
<span class="t" id="t202" style="top:598.5px;font-size:13.6px;color:#7a7a7a;left:1265px;transform:scaleX(0.9822);">64,290.00</span>
<div class="b" style="left:24px;top:623px;width:1309px;height:28px;background:#ffffff;border-bottom:1px solid #eeeeee;box-sizing:border-box;"></div>
<div class="b" style="left:24px;top:623px;width:1px;height:27px;background:#f1f8fb;"></div>
<div class="b" style="left:63px;top:623px;width:1px;height:27px;background:#f1f8fb;"></div>
<span class="t" id="t203" style="top:629.25px;font-size:13.61px;color:#666666;left:30px;transform:scaleX(0.9863);">15</span>
<span class="t" id="t204" style="top:626.5px;font-size:13.6px;color:#7a7a7a;left:74px;transform:scaleX(0.9557);">2021</span>
<span class="t" id="t205" style="top:626.5px;font-size:13.6px;color:#7a7a7a;left:143px;">1</span>
<span class="t" id="t206" style="top:626.5px;font-size:13.6px;color:#7a7a7a;left:163px;transform:scaleX(0.8909);">LIBRO-BASE</span>
<span class="t" id="t207" style="top:626.5px;font-size:13.6px;color:#2f9fd0;left:265px;transform:scaleX(0.9718);">417505</span>
<span class="t" id="t208" style="top:626.5px;font-size:13.6px;color:#2f9fd0;left:366px;transform:scaleX(0.9254);">DEVOLUCIONES EN VENT...</span>
<span class="t" id="t209" style="top:626.5px;font-size:13.6px;color:#2f9fd0;left:548px;transform:scaleX(0.99);">01</span>
<span class="t" id="t210" style="top:626.5px;font-size:13.6px;color:#2f9fd0;left:638px;transform:scaleX(0.9208);">OMARLY MARTINEZ</span>
<span class="t" id="t211" style="top:626.5px;font-size:13.6px;color:#7a7a7a;left:829px;transform:scaleX(0.8737);">COP</span>
<span class="t" id="t212" style="top:626.5px;font-size:13.6px;color:#7a7a7a;left:955px;transform:scaleX(0.9845);">143,000.00</span>
<span class="t" id="t213" style="top:626.5px;font-size:13.6px;color:#7a7a7a;left:1147px;transform:scaleX(0.9867);">0.00</span>
<span class="t" id="t214" style="top:626.5px;font-size:13.6px;color:#7a7a7a;left:1257px;transform:scaleX(0.9845);">143,000.00</span>
<div class="b" style="left:24px;top:651px;width:1309px;height:28px;background:#ffffff;border-bottom:1px solid #eeeeee;box-sizing:border-box;"></div>
<div class="b" style="left:24px;top:651px;width:1px;height:27px;background:#f1f8fb;"></div>
<div class="b" style="left:63px;top:651px;width:1px;height:27px;background:#f1f8fb;"></div>
<span class="t" id="t215" style="top:657.25px;font-size:13.61px;color:#666666;left:30px;transform:scaleX(0.9738);">16</span>
<span class="t" id="t216" style="top:654.5px;font-size:13.6px;color:#7a7a7a;left:74px;transform:scaleX(0.9557);">2021</span>
<span class="t" id="t217" style="top:654.5px;font-size:13.6px;color:#7a7a7a;left:143px;">1</span>
<span class="t" id="t218" style="top:654.5px;font-size:13.6px;color:#7a7a7a;left:163px;transform:scaleX(0.8909);">LIBRO-BASE</span>
<span class="t" id="t219" style="top:654.5px;font-size:13.6px;color:#2f9fd0;left:265px;transform:scaleX(0.9718);">417505</span>
<span class="t" id="t220" style="top:654.5px;font-size:13.6px;color:#2f9fd0;left:366px;transform:scaleX(0.9254);">DEVOLUCIONES EN VENT...</span>
<span class="t" id="t221" style="top:654.5px;font-size:13.6px;color:#2f9fd0;left:548px;transform:scaleX(0.9779);">1000288759</span>
<span class="t" id="t222" style="top:654.5px;font-size:13.6px;color:#2f9fd0;left:638px;transform:scaleX(0.9464);">ALVEIRO MIGUEL TRIVIÑO...</span>
<span class="t" id="t223" style="top:654.5px;font-size:13.6px;color:#7a7a7a;left:829px;transform:scaleX(0.8737);">COP</span>
<span class="t" id="t224" style="top:654.5px;font-size:13.6px;color:#7a7a7a;left:982px;transform:scaleX(0.9726);">400.00</span>
<span class="t" id="t225" style="top:654.5px;font-size:13.6px;color:#7a7a7a;left:1147px;transform:scaleX(0.9867);">0.00</span>
<span class="t" id="t226" style="top:654.5px;font-size:13.6px;color:#7a7a7a;left:1284px;transform:scaleX(0.9741);">400.00</span>
<div class="b" style="left:24px;top:679px;width:1309px;height:28px;background:#ffffff;border-bottom:1px solid #eeeeee;box-sizing:border-box;"></div>
<div class="b" style="left:24px;top:679px;width:1px;height:27px;background:#f1f8fb;"></div>
<div class="b" style="left:63px;top:679px;width:1px;height:27px;background:#f1f8fb;"></div>
<span class="t" id="t227" style="top:685.25px;font-size:13.61px;color:#666666;left:30px;transform:scaleX(0.9737);">17</span>
<span class="t" id="t228" style="top:682.5px;font-size:13.6px;color:#7a7a7a;left:74px;transform:scaleX(0.9557);">2021</span>
<span class="t" id="t229" style="top:682.5px;font-size:13.6px;color:#7a7a7a;left:143px;">1</span>
<span class="t" id="t230" style="top:682.5px;font-size:13.6px;color:#7a7a7a;left:163px;transform:scaleX(0.8909);">LIBRO-BASE</span>
<span class="t" id="t231" style="top:682.5px;font-size:13.6px;color:#2f9fd0;left:265px;transform:scaleX(0.9718);">417505</span>
<span class="t" id="t232" style="top:682.5px;font-size:13.6px;color:#2f9fd0;left:366px;transform:scaleX(0.9254);">DEVOLUCIONES EN VENT...</span>
<span class="t" id="t233" style="top:682.5px;font-size:13.6px;color:#2f9fd0;left:548px;transform:scaleX(1.004);">1001</span>
<span class="t" id="t234" style="top:682.5px;font-size:13.6px;color:#2f9fd0;left:638px;transform:scaleX(0.9023);">MARIO ANDRES PEREZ</span>
<span class="t" id="t235" style="top:682.5px;font-size:13.6px;color:#7a7a7a;left:829px;transform:scaleX(0.8737);">COP</span>
<span class="t" id="t236" style="top:682.5px;font-size:13.6px;color:#7a7a7a;left:955px;transform:scaleX(0.9845);">157,500.00</span>
<span class="t" id="t237" style="top:682.5px;font-size:13.6px;color:#7a7a7a;left:1114px;transform:scaleX(0.986);">96,500.00</span>
<span class="t" id="t238" style="top:682.5px;font-size:13.6px;color:#7a7a7a;left:1258px;transform:scaleX(0.9786);">254,000.00</span>
<div class="b" style="left:24px;top:707px;width:1309px;height:28px;background:#ffffff;border-bottom:1px solid #eeeeee;box-sizing:border-box;"></div>
<div class="b" style="left:24px;top:707px;width:1px;height:27px;background:#f1f8fb;"></div>
<div class="b" style="left:63px;top:707px;width:1px;height:27px;background:#f1f8fb;"></div>
<span class="t" id="t239" style="top:713.25px;font-size:13.61px;color:#666666;left:30px;transform:scaleX(0.9884);">18</span>
<span class="t" id="t240" style="top:710.5px;font-size:13.6px;color:#7a7a7a;left:74px;transform:scaleX(0.9557);">2021</span>
<span class="t" id="t241" style="top:710.5px;font-size:13.6px;color:#7a7a7a;left:143px;">1</span>
<span class="t" id="t242" style="top:710.5px;font-size:13.6px;color:#7a7a7a;left:163px;transform:scaleX(0.8909);">LIBRO-BASE</span>
<span class="t" id="t243" style="top:710.5px;font-size:13.6px;color:#2f9fd0;left:265px;transform:scaleX(0.9718);">417505</span>
<span class="t" id="t244" style="top:710.5px;font-size:13.6px;color:#2f9fd0;left:366px;transform:scaleX(0.9254);">DEVOLUCIONES EN VENT...</span>
<span class="t" id="t245" style="top:710.5px;font-size:13.6px;color:#2f9fd0;left:548px;transform:scaleX(0.9779);">1000288759</span>
<span class="t" id="t246" style="top:710.5px;font-size:13.6px;color:#2f9fd0;left:638px;transform:scaleX(0.9464);">ALVEIRO MIGUEL TRIVIÑO...</span>
<span class="t" id="t247" style="top:710.5px;font-size:13.6px;color:#7a7a7a;left:829px;transform:scaleX(0.8737);">COP</span>
<span class="t" id="t248" style="top:710.5px;font-size:13.6px;color:#7a7a7a;left:963px;transform:scaleX(0.9814);">50,000.00</span>
<span class="t" id="t249" style="top:710.5px;font-size:13.6px;color:#7a7a7a;left:1147px;transform:scaleX(0.9867);">0.00</span>
<span class="t" id="t250" style="top:710.5px;font-size:13.6px;color:#7a7a7a;left:1265px;transform:scaleX(0.983);">50,000.00</span>
<div class="b" style="left:24px;top:735px;width:1309px;height:28px;background:#ffffff;border-bottom:1px solid #eeeeee;box-sizing:border-box;"></div>
<div class="b" style="left:24px;top:735px;width:1px;height:27px;background:#f1f8fb;"></div>
<div class="b" style="left:63px;top:735px;width:1px;height:27px;background:#f1f8fb;"></div>
<span class="t" id="t251" style="top:741.25px;font-size:13.61px;color:#666666;left:30px;transform:scaleX(0.9962);">19</span>
<span class="t" id="t252" style="top:738.5px;font-size:13.6px;color:#7a7a7a;left:74px;transform:scaleX(0.9557);">2021</span>
<span class="t" id="t253" style="top:738.5px;font-size:13.6px;color:#7a7a7a;left:143px;">1</span>
<span class="t" id="t254" style="top:738.5px;font-size:13.6px;color:#7a7a7a;left:163px;transform:scaleX(0.8909);">LIBRO-BASE</span>
<span class="t" id="t255" style="top:738.5px;font-size:13.6px;color:#2f9fd0;left:265px;transform:scaleX(0.9718);">417505</span>
<span class="t" id="t256" style="top:738.5px;font-size:13.6px;color:#2f9fd0;left:366px;transform:scaleX(0.9254);">DEVOLUCIONES EN VENT...</span>
<span class="t" id="t257" style="top:738.5px;font-size:13.6px;color:#2f9fd0;left:548px;transform:scaleX(0.9779);">1032454439</span>
<span class="t" id="t258" style="top:738.5px;font-size:13.6px;color:#2f9fd0;letter-spacing:-0.026px;left:637.65px;">leidy johanna giraldo puentes</span>
<span class="t" id="t259" style="top:738.5px;font-size:13.6px;color:#7a7a7a;left:829px;transform:scaleX(0.8737);">COP</span>
<span class="t" id="t260" style="top:738.5px;font-size:13.6px;color:#7a7a7a;left:944px;transform:scaleX(0.9818);">3,100,003.00</span>
<span class="t" id="t261" style="top:738.5px;font-size:13.6px;color:#7a7a7a;left:1147px;transform:scaleX(0.9867);">0.00</span>
<span class="t" id="t262" style="top:738.5px;font-size:13.6px;color:#7a7a7a;left:1246px;transform:scaleX(0.9815);">3,100,003.00</span>
<div class="b" style="left:24px;top:763px;width:1309px;height:28px;background:#ffffff;border-bottom:1px solid #eeeeee;box-sizing:border-box;"></div>
<div class="b" style="left:24px;top:763px;width:1px;height:27px;background:#f1f8fb;"></div>
<div class="b" style="left:63px;top:763px;width:1px;height:27px;background:#f1f8fb;"></div>
<span class="t" id="t263" style="top:769.25px;font-size:13.61px;color:#666666;left:30px;transform:scaleX(0.9724);">20</span>
<span class="t" id="t264" style="top:766.5px;font-size:13.6px;color:#7a7a7a;left:74px;transform:scaleX(0.9557);">2021</span>
<span class="t" id="t265" style="top:766.5px;font-size:13.6px;color:#7a7a7a;left:143px;">1</span>
<span class="t" id="t266" style="top:766.5px;font-size:13.6px;color:#7a7a7a;left:163px;transform:scaleX(0.8909);">LIBRO-BASE</span>
<span class="t" id="t267" style="top:766.5px;font-size:13.6px;color:#2f9fd0;left:265px;transform:scaleX(0.9718);">417505</span>
<span class="t" id="t268" style="top:766.5px;font-size:13.6px;color:#2f9fd0;left:366px;transform:scaleX(0.9254);">DEVOLUCIONES EN VENT...</span>
<span class="t" id="t269" style="top:766.5px;font-size:13.6px;color:#2f9fd0;left:548px;transform:scaleX(0.9758);">001</span>
<span class="t" id="t270" style="top:766.5px;font-size:13.6px;color:#2f9fd0;left:638px;transform:scaleX(0.9563);">Venicia Evelina Mendoza Ce...</span>
<span class="t" id="t271" style="top:766.5px;font-size:13.6px;color:#7a7a7a;left:829px;transform:scaleX(0.8737);">COP</span>
<span class="t" id="t272" style="top:766.5px;font-size:13.6px;color:#7a7a7a;left:970px;transform:scaleX(0.9849);">3,500.00</span>
<span class="t" id="t273" style="top:766.5px;font-size:13.6px;color:#7a7a7a;left:1147px;transform:scaleX(0.9867);">0.00</span>
<span class="t" id="t274" style="top:766.5px;font-size:13.6px;color:#7a7a7a;left:1272px;transform:scaleX(0.9865);">3,500.00</span>
<div class="b" style="left:24px;top:791px;width:1309px;height:28px;background:#ffffff;border-bottom:1px solid #eeeeee;box-sizing:border-box;"></div>
<div class="b" style="left:24px;top:791px;width:1px;height:27px;background:#f1f8fb;"></div>
<div class="b" style="left:63px;top:791px;width:1px;height:27px;background:#f1f8fb;"></div>
<span class="t" id="t275" style="top:797.25px;font-size:13.61px;color:#666666;left:30px;transform:scaleX(0.9338);">21</span>
<span class="t" id="t276" style="top:794.5px;font-size:13.6px;color:#7a7a7a;left:74px;transform:scaleX(0.9557);">2021</span>
<span class="t" id="t277" style="top:794.5px;font-size:13.6px;color:#7a7a7a;left:143px;">1</span>
<span class="t" id="t278" style="top:794.5px;font-size:13.6px;color:#7a7a7a;left:163px;transform:scaleX(0.8909);">LIBRO-BASE</span>
<span class="t" id="t279" style="top:794.5px;font-size:13.6px;color:#2f9fd0;left:265px;transform:scaleX(0.9718);">417505</span>
<span class="t" id="t280" style="top:794.5px;font-size:13.6px;color:#2f9fd0;left:366px;transform:scaleX(0.9254);">DEVOLUCIONES EN VENT...</span>
<span class="t" id="t281" style="top:794.5px;font-size:13.6px;color:#2f9fd0;left:548px;transform:scaleX(0.9758);">001</span>
<span class="t" id="t282" style="top:794.5px;font-size:13.6px;color:#2f9fd0;left:638px;transform:scaleX(0.9563);">Venicia Evelina Mendoza Ce...</span>
<span class="t" id="t283" style="top:794.5px;font-size:13.6px;color:#7a7a7a;left:829px;transform:scaleX(0.8737);">COP</span>
<span class="t" id="t284" style="top:794.5px;font-size:13.6px;color:#7a7a7a;left:956px;transform:scaleX(0.978);">875,000.00</span>
<span class="t" id="t285" style="top:794.5px;font-size:13.6px;color:#7a7a7a;left:1147px;transform:scaleX(0.9867);">0.00</span>
<span class="t" id="t286" style="top:794.5px;font-size:13.6px;color:#7a7a7a;left:1258px;transform:scaleX(0.978);">875,000.00</span>
<div class="b" style="left:1333px;top:231px;width:16px;height:587px;background:#f1f1f1;"></div>
<div class="b" style="left:1333px;top:252px;width:14px;height:347px;background:#c1c1c1;"></div>
<svg class="b" style="left:1334px;top:239.8px;" width="10" height="6" viewBox="0 0 10 6"><path d="M0 5.2L4.5 0L9 5.2z" fill="#a3a3a3"/></svg>
<svg class="b" style="left:1334px;top:804.5px;" width="10" height="6" viewBox="0 0 10 6"><path d="M0 0.3h9.4L4.7 5.7z" fill="#505050"/></svg>
<div class="b" style="left:23px;top:820px;width:1328px;height:1px;background:#c6c6c6;"></div>
<span class="t" id="t287" style="top:826.25px;font-size:13.8px;color:#4f4f4f;font-weight:bold;letter-spacing:0.226px;left:70.3px;-webkit-text-stroke:0.25px #4f4f4f;">Totales</span>
<span class="t" id="t288" style="top:825px;font-size:14.2px;color:#4f4f4f;font-weight:bold;left:920px;transform:scaleX(1.074);-webkit-text-stroke:0.25px #4f4f4f;">26,826,165.53</span>
<span class="t" id="t289" style="top:825px;font-size:14.2px;color:#4f4f4f;font-weight:bold;left:1080px;transform:scaleX(1.0799);-webkit-text-stroke:0.25px #4f4f4f;">2,154,150.00</span>
<div class="b" style="left:1217px;top:826px;width:113px;height:19px;background:#8bdffd;"></div>
<span class="t" id="t290" style="top:825px;font-size:14.2px;color:#3f4f58;font-weight:bold;left:1224px;transform:scaleX(1.0756);-webkit-text-stroke:0.25px #3f4f58;">28,980,315.53</span>
<div class="b" style="left:23px;top:846px;width:1328px;height:1px;background:#c6c6c6;"></div>
<div class="b" style="left:24px;top:847px;width:1327px;height:18px;background:#f1f1f1;"></div>
<div class="b" style="left:45px;top:847px;width:829px;height:16px;background:#c1c1c1;"></div>
<svg class="b" style="left:31.5px;top:849.5px;" width="6" height="10" viewBox="0 0 6 10"><path d="M5.7 0.2v9.6L0.3 5z" fill="#a3a3a3"/></svg>
<svg class="b" style="left:1338px;top:849.5px;" width="6" height="10" viewBox="0 0 6 10"><path d="M0.2 0.2v9.6L5.5 5z" fill="#505050"/></svg>
<div class="b" style="left:880px;top:198px;width:449px;height:618px;border-radius:4px;box-shadow:inset 0 0 5px rgba(0,0,0,0.24);"></div>
<svg class="b" style="left:860px;top:180px;" width="500" height="680" viewBox="0 0 500 680"><defs><filter id="sh" x="-5%" y="-5%" width="110%" height="110%"><feDropShadow dx="2" dy="2" stdDeviation="3" flood-color="#000" flood-opacity="0.42"/></filter></defs><g filter="url(#sh)"><rect x="18.5" y="16.5" width="452" height="621" rx="5.5" ry="5.5" fill="none" stroke="#07adea" stroke-width="4"/><path d="M297.5 637.5 L338 655" stroke="#07adea" stroke-width="3.4" fill="none"/><path d="M351.9 661.3 L334 659.5 L338.4 649.5z" fill="#07adea"/></g></svg>
</body></html>
